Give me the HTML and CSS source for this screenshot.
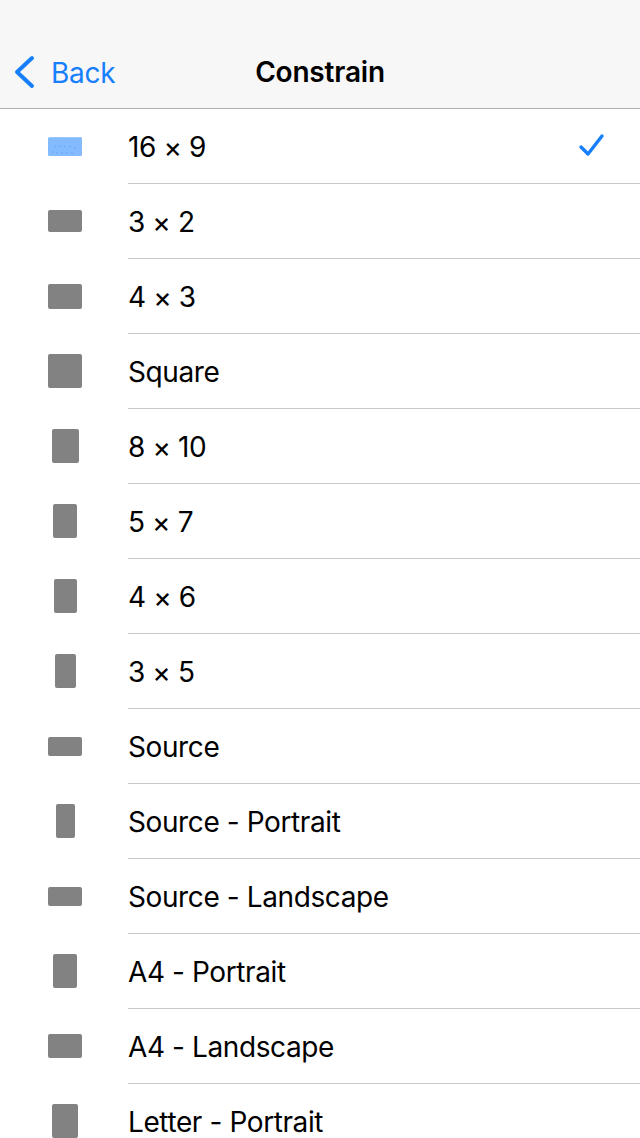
FILE: index.html
```html
<!DOCTYPE html>
<html lang="en">
<head>
<meta charset="utf-8">
<title>Constrain</title>
<link rel="stylesheet" href="styles.css">
</head>
<body>
<header class="navbar">
  <a class="back" href="#">
    <svg class="chevron" width="24" height="34" viewBox="0 0 24 34"><path d="M19 3 L4 17 L19 31" fill="none" stroke="currentColor" stroke-width="4" stroke-linecap="round" stroke-linejoin="round"/></svg>
    <span>Back</span>
  </a>
  <h1 class="title">Constrain</h1>
</header>
<ul class="list">
  <li class="row selected"><span class="icon-box"><svg class="shape-svg" width="34" height="19" viewBox="0 0 34 19"><rect width="34" height="19" rx="1.5" fill="#84bbff"/><g fill="#5e9ef7"><circle cx="7" cy="9.5" r="0.7"/><circle cx="12" cy="9.5" r="0.7"/><circle cx="17" cy="9.5" r="0.7"/><circle cx="22" cy="9.5" r="0.7"/><circle cx="27" cy="11" r="0.7"/><circle cx="5" cy="15" r="0.7"/><circle cx="9" cy="16" r="0.7"/><circle cx="14" cy="16" r="0.7"/><circle cx="19" cy="16" r="0.7"/><circle cx="24" cy="16" r="0.7"/></g><path d="M1 0.5 H33" stroke="#b8d8ff" stroke-width="1" stroke-dasharray="1 1.5"/></svg></span><span class="label"><span class="text">16 × 9</span><svg class="check" width="30" height="28" viewBox="0 0 30 28"><path d="M4 15 L11 22 L25 4" fill="none" stroke="currentColor" stroke-width="3.4" stroke-linecap="round" stroke-linejoin="round"/></svg></span></li>
  <li class="row"><span class="icon-box"><span class="shape" style="width:34px;height:22px"></span></span><span class="label"><span class="text">3 × 2</span></span></li>
  <li class="row"><span class="icon-box"><span class="shape" style="width:34px;height:25px"></span></span><span class="label"><span class="text">4 × 3</span></span></li>
  <li class="row"><span class="icon-box"><span class="shape" style="width:34px;height:34px"></span></span><span class="label"><span class="text">Square</span></span></li>
  <li class="row"><span class="icon-box"><span class="shape" style="width:27px;height:34px"></span></span><span class="label"><span class="text">8 × 10</span></span></li>
  <li class="row"><span class="icon-box"><span class="shape" style="width:24px;height:34px"></span></span><span class="label"><span class="text">5 × 7</span></span></li>
  <li class="row"><span class="icon-box"><span class="shape" style="width:23px;height:34px"></span></span><span class="label"><span class="text">4 × 6</span></span></li>
  <li class="row"><span class="icon-box"><span class="shape" style="width:21px;height:34px"></span></span><span class="label"><span class="text">3 × 5</span></span></li>
  <li class="row"><span class="icon-box"><span class="shape" style="width:34px;height:19px"></span></span><span class="label"><span class="text">Source</span></span></li>
  <li class="row"><span class="icon-box"><span class="shape" style="width:19px;height:34px"></span></span><span class="label"><span class="text">Source - Portrait</span></span></li>
  <li class="row"><span class="icon-box"><span class="shape" style="width:34px;height:19px"></span></span><span class="label"><span class="text">Source - Landscape</span></span></li>
  <li class="row"><span class="icon-box"><span class="shape" style="width:24px;height:34px"></span></span><span class="label"><span class="text">A4 - Portrait</span></span></li>
  <li class="row"><span class="icon-box"><span class="shape" style="width:34px;height:24px"></span></span><span class="label"><span class="text">A4 - Landscape</span></span></li>
  <li class="row"><span class="icon-box"><span class="shape" style="width:26px;height:34px"></span></span><span class="label"><span class="text">Letter - Portrait</span></span></li>
</ul>
</body>
</html>
```
FILE: styles.css
```css
* { box-sizing: border-box; }
html, body {
  margin: 0;
  padding: 0;
  background: #ffffff;
}
body {
  font-family: "Inter", "Liberation Sans", sans-serif;
  color: #000;
  -webkit-font-smoothing: antialiased;
}
.navbar {
  position: relative;
  height: 109px;
  background: #f7f7f7;
  border-bottom: 1px solid #b0b0b0;
  display: flex;
  align-items: flex-end;
  padding-bottom: 19px;
}
.back {
  display: flex;
  align-items: center;
  gap: 14px;
  color: #177ffb;
  text-decoration: none;
  font-size: 28px;
  letter-spacing: -0.3px;
  padding-left: 13px;
  height: 34px;
}
.back span { position: relative; top: 1px; }
.chevron { display: block; }
.title {
  position: absolute;
  left: 0;
  right: 0;
  bottom: 19px;
  margin: 0;
  text-align: center;
  font-size: 28px;
  font-weight: 600;
  letter-spacing: -0.2px;
  line-height: 34px;
}
.list {
  list-style: none;
  margin: 0;
  padding: 0;
}
.row {
  display: flex;
  align-items: flex-start;
}
.icon-box {
  width: 34px;
  height: 74px;
  margin-left: 48px;
  margin-right: 46px;
  display: flex;
  align-items: center;
  justify-content: center;
  flex: none;
}
.shape {
  display: block;
  background: #828282;
  border-radius: 2px;
}
.shape-svg { display: block; }
.label {
  flex: 1;
  height: 75px;
  border-bottom: 1px solid #c8c7cc;
  display: flex;
  align-items: center;
  justify-content: space-between;
  font-size: 28px;
  letter-spacing: -0.4px;
  padding-right: 33px;
}
.text {
  position: relative;
  top: 1px;
}
.check {
  color: #177ffb;
  display: block;
}
```
